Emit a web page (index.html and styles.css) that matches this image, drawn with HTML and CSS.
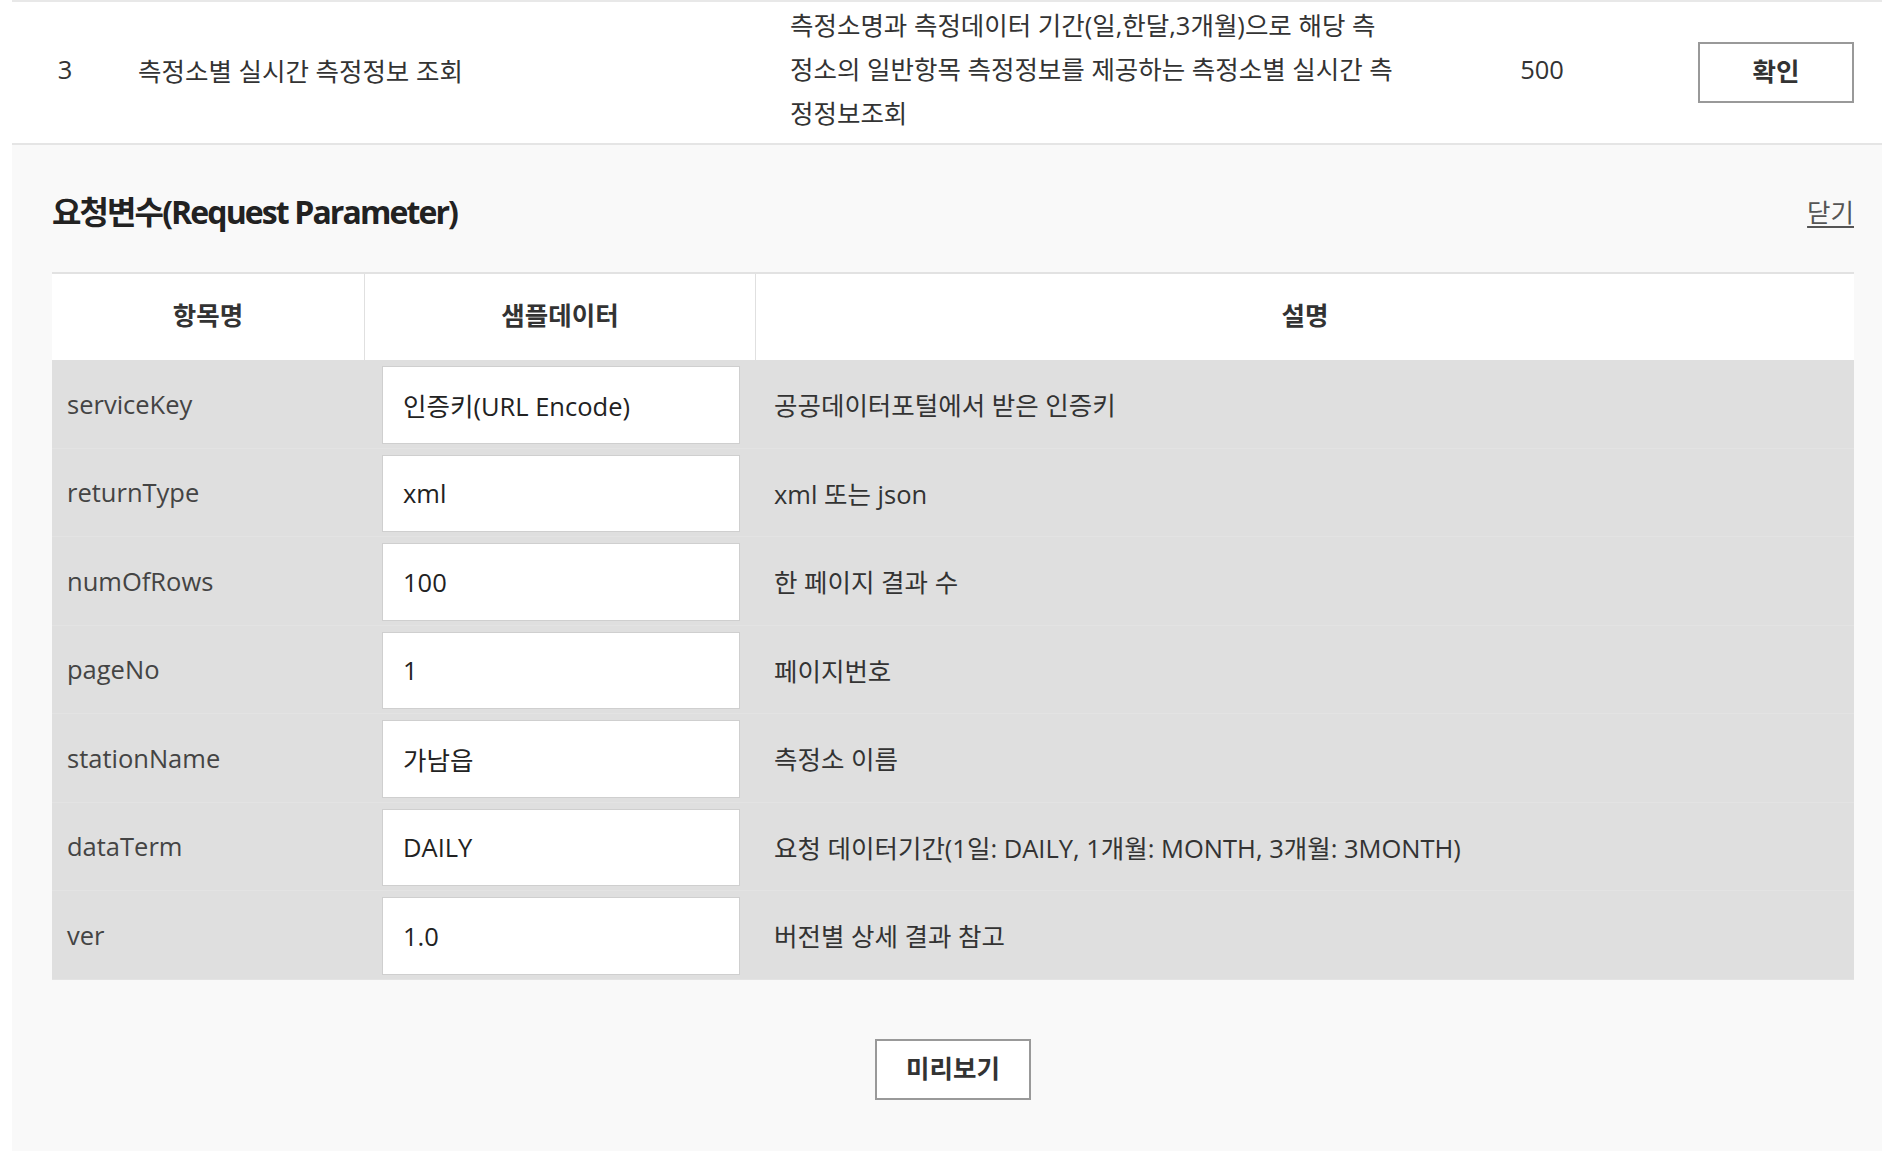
FILE: index.html
```html
<!DOCTYPE html>
<html lang="ko">
<head>
<meta charset="utf-8">
<title>요청변수</title>
<link rel="stylesheet" href="styles.css">
</head>
<body>
<div class="wrap">
  <div class="op-row">
    <div class="op-no">3</div>
    <div class="op-name">측정소별 실시간 측정정보 조회</div>
    <div class="op-desc"><p class="op-desc-text">측정소명과 측정데이터 기간(일,한달,3개월)으로 해당 측정소의 일반항목 측정정보를 제공하는 측정소별 실시간 측정정보조회</p></div>
    <div class="op-count">500</div>
    <div class="op-btn"><button class="btn">확인</button></div>
  </div>
  <section class="panel">
    <div class="panel-head">
      <h2 class="panel-title">요청변수(Request Parameter)</h2>
      <a class="close" href="#">닫기</a>
    </div>
    <div class="ptable">
      <div class="prow phead">
        <div class="c c1">항목명</div>
        <div class="c c2">샘플데이터</div>
        <div class="c c3">설명</div>
      </div>
      <div class="prow">
        <div class="c c1">serviceKey</div>
        <div class="c c2"><input class="inp" value="인증키(URL Encode)"></div>
        <div class="c c3">공공데이터포털에서 받은 인증키</div>
      </div>
      <div class="prow">
        <div class="c c1">returnType</div>
        <div class="c c2"><input class="inp" value="xml"></div>
        <div class="c c3">xml 또는 json</div>
      </div>
      <div class="prow">
        <div class="c c1">numOfRows</div>
        <div class="c c2"><input class="inp" value="100"></div>
        <div class="c c3">한 페이지 결과 수</div>
      </div>
      <div class="prow">
        <div class="c c1">pageNo</div>
        <div class="c c2"><input class="inp" value="1"></div>
        <div class="c c3">페이지번호</div>
      </div>
      <div class="prow">
        <div class="c c1">stationName</div>
        <div class="c c2"><input class="inp" value="가남읍"></div>
        <div class="c c3">측정소 이름</div>
      </div>
      <div class="prow">
        <div class="c c1">dataTerm</div>
        <div class="c c2"><input class="inp" value="DAILY"></div>
        <div class="c c3">요청 데이터기간(1일: DAILY, 1개월: MONTH, 3개월: 3MONTH)</div>
      </div>
      <div class="prow">
        <div class="c c1">ver</div>
        <div class="c c2"><input class="inp" value="1.0"></div>
        <div class="c c3">버전별 상세 결과 참고</div>
      </div>
    </div>
    <div class="actions"><button class="btn">미리보기</button></div>
  </section>
</div>
</body>
</html>
```
FILE: styles.css
```css
* { box-sizing: border-box; }
html, body { margin: 0; padding: 0; background: #fff; }
body {
  font-family: "Open Sans", "Noto Sans CJK KR", sans-serif;
  color: #333;
  font-size: 25.5px;
  letter-spacing: 0;
}
.wrap { margin-left: 12px; }

.op-row {
  display: grid;
  grid-template-columns: 106px 652px 672px 200px 1fr;
  align-items: center;
  height: 145px;
  border-top: 2px solid #e8e8e8;
  border-bottom: 2px solid #e5e5e5;
  background: #fff;
}
.op-no, .op-name, .op-desc, .op-count { padding-bottom: 7px; }
.op-no { text-align: center; }
.op-name { padding-left: 20px; }
.op-desc { padding-left: 20px; }
.op-desc-text {
  margin: 0;
  width: 606px;
  line-height: 44px;
  word-break: break-all;
}
.op-count { text-align: center; }
.op-btn { display: flex; justify-content: flex-end; padding-right: 28px; }

.btn {
  width: 156px;
  height: 61px;
  background: #fff;
  border: 2px solid #999;
  font-family: inherit;
  font-size: 25.5px;
  font-weight: 700;
  color: #333;
  padding: 0 0 6px;
}

.panel {
  background: #f9f9f9;
  padding: 45px 28px 51px 40px;
}
.panel-head {
  display: flex;
  justify-content: space-between;
  align-items: center;
  height: 40px;
}
.panel-title {
  margin: 0;
  font-size: 32px;
  font-weight: 700;
  letter-spacing: -1.9px;
  color: #222;
}
.close {
  color: #555;
  font-size: 25.5px;
  text-decoration: underline;
  text-underline-offset: 4px;
}

.ptable {
  margin-top: 42px;
  border-top: 2px solid #e2e2e2;
}
.prow {
  display: grid;
  grid-template-columns: 313px 391px 1fr;
  height: 88.5px;
  background: #dfdfdf;
  border-bottom: 1px solid #e3e3e3;
}
.prow .c { display: flex; align-items: center; }
.prow .c1 { padding-left: 15px; color: #444; }
.prow .c2 { padding: 6px 16px 4px 17px; align-items: stretch; }
.prow .c3 { padding-left: 18px; }
.prow.phead {
  height: 86px;
  background: #fff;
  border-bottom: none;
  font-weight: 700;
}
.phead .c { justify-content: center; align-items: center; padding: 0 0 7px; color: #333; }
.phead .c1, .phead .c2 { border-right: 1px solid #e0e0e0; }

.inp {
  width: 100%;
  height: 100%;
  border: 1px solid #cfcfcf;
  background: #fff;
  font-family: inherit;
  font-size: 25.5px;
  color: #222;
  padding: 0 0 0 20px;
  outline: none;
}

.actions {
  display: flex;
  justify-content: center;
  margin-top: 59px;
}
```
